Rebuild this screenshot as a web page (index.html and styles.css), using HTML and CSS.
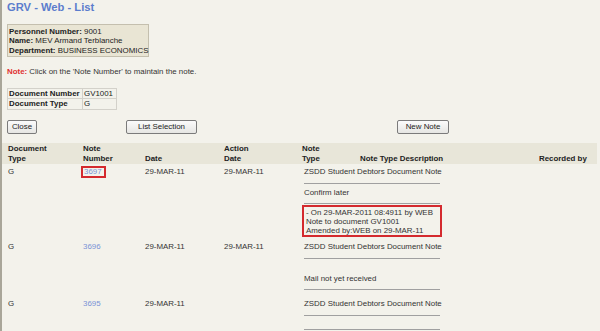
FILE: index.html
```html
<!DOCTYPE html>
<html>
<head>
<meta charset="utf-8">
<link rel="stylesheet" href="styles.css">
</head>
<body>
<div class="page">
  <h1 class="title">GRV - Web - List</h1>
  <div class="info">
    <div><b>Personnel Number:</b> 9001</div>
    <div><b>Name:</b> MEV Armand Terblanche</div>
    <div><b>Department:</b> BUSINESS ECONOMICS</div>
  </div>
  <p class="note"><span class="note-label">Note:</span> Click on the 'Note Number' to maintain the note.</p>
  <table class="doc">
    <tr><th>Document Number</th><td>GV1001</td></tr>
    <tr><th>Document Type</th><td>G</td></tr>
  </table>
  <div class="buttons">
    <button class="btn btn-close">Close</button>
    <button class="btn btn-list">List Selection</button>
    <button class="btn btn-new">New Note</button>
  </div>
  <div class="list">
    <div class="row head">
      <div>Document<br>Type</div>
      <div>Note<br>Number</div>
      <div><br>Date</div>
      <div>Action<br>Date</div>
      <div>Note<br>Type</div>
      <div><br>Note Type Description</div>
      <div><br>Recorded by</div>
    </div>
    <div class="row data r1">
      <div>G</div>
      <div><a class="link boxed">3697</a></div>
      <div>29-MAR-11</div>
      <div>29-MAR-11</div>
      <div class="notes">
        <div class="desc">ZSDD Student Debtors Document Note</div>
        <div class="rule rule-a"></div>
        <div class="text">Confirm later</div>
        <div class="rule rule-b"></div>
        <div class="history">- On 29-MAR-2011 08:4911 by WEB<br>Note to document GV1001<br>Amended by:WEB on 29-MAR-11</div>
      </div>
    </div>
    <div class="row data r2">
      <div>G</div>
      <div><a class="link">3696</a></div>
      <div>29-MAR-11</div>
      <div>29-MAR-11</div>
      <div class="notes">
        <div class="desc">ZSDD Student Debtors Document Note</div>
        <div class="rule rule-a"></div>
        <div class="text gap">Mail not yet received</div>
        <div class="rule rule-b"></div>
      </div>
    </div>
    <div class="row data r3">
      <div>G</div>
      <div><a class="link">3695</a></div>
      <div>29-MAR-11</div>
      <div></div>
      <div class="notes">
        <div class="desc">ZSDD Student Debtors Document Note</div>
        <div class="rule rule-a"></div>
        <div class="text empty"></div>
        <div class="rule rule-b"></div>
      </div>
    </div>
  </div>
</div>
</body>
</html>
```

FILE: styles.css
```css
html, body {
  margin: 0;
  padding: 0;
  background: #f3f2eb;
}
body {
  border-left: 2px solid #a9a699;
  min-height: 331px;
  box-sizing: border-box;
  font-family: "Liberation Sans", Arial, sans-serif;
  font-size: 7.9px;
  color: #333;
  overflow: hidden;
}
.page {
  padding: 0 3px 0 5px;
}
.title {
  margin: 0;
  padding-top: 1px;
  font-size: 11.2px;
  line-height: 13px;
  font-weight: bold;
  color: #5b7dcd;
}
.info {
  margin-top: 10px;
  width: 138px;
  padding: 2px 1px 1px 1px;
  background: #e9e5d4;
  border: 1px solid #c4bfae;
  line-height: 9.3px;
  color: #222;
  white-space: nowrap;
}
.note {
  margin: 10px 0 0 0;
  line-height: 10px;
}
.note-label {
  color: #e03030;
  font-weight: bold;
}
.doc {
  margin-top: 11px;
  border-collapse: collapse;
  border: 1px solid #c9c7c0;
  line-height: 9.5px;
}
.doc th, .doc td {
  border: 1px solid #d3d1ca;
  padding: 0 1px;
  text-align: left;
  color: #222;
}
.doc th { width: 72px; }
.doc td { width: 31px; }
.buttons {
  display: flex;
  margin-top: 10px;
  height: 14px;
}
.btn {
  font-family: "Liberation Sans", Arial, sans-serif;
  font-size: 7.9px;
  height: 14px;
  padding: 0;
  border: 1px solid #7b7b7b;
  border-radius: 2px;
  background: linear-gradient(#fbfbfb, #e6e6e3);
  color: #222;
  line-height: 12px;
}
.btn-close { width: 30px; }
.btn-list { width: 71px; margin-left: 89px; }
.btn-new { width: 52px; margin-left: 200px; }
.list {
  margin-top: 9px;
  margin-left: -5px;
}
.row {
  display: grid;
  grid-template-columns: 75px 62px 79px 78px 58px 179px auto;
  padding-left: 6px;
}
.head {
  background: #e8e6d9;
  font-weight: bold;
  color: #222;
  line-height: 10px;
  padding-top: 1px;
}
.data {
  line-height: 10px;
}
.r1 { padding-top: 3px; }
.r2 { padding-top: 5px; }
.r3 { padding-top: 8px; }
.notes {
  grid-column: 5 / 8;
  padding-left: 2px;
}
.desc { line-height: 10px; }
.rule {
  width: 136px;
  height: 1px;
  background: #a0a0a0;
}
.rule-a { margin: 6px 0 4px; }
.rule-b { margin: 5px 0 1px; }
.text { line-height: 10px; }
.text.gap { margin-top: 15px; }
.text.empty { height: 4px; }
.history {
  margin-left: -2px;
  width: 132px;
  padding: 1px 2px 0 2px;
  border: 2px solid #d42a2e;
  line-height: 9px;
}
.link {
  color: #7a93d6;
  text-decoration: none;
}
.boxed {
  display: inline-block;
  margin-left: -2px;
  margin-top: -1px;
  padding: 0 2px 0 1px;
  border: 2px solid #d42a2e;
  line-height: 8px;
}
```
